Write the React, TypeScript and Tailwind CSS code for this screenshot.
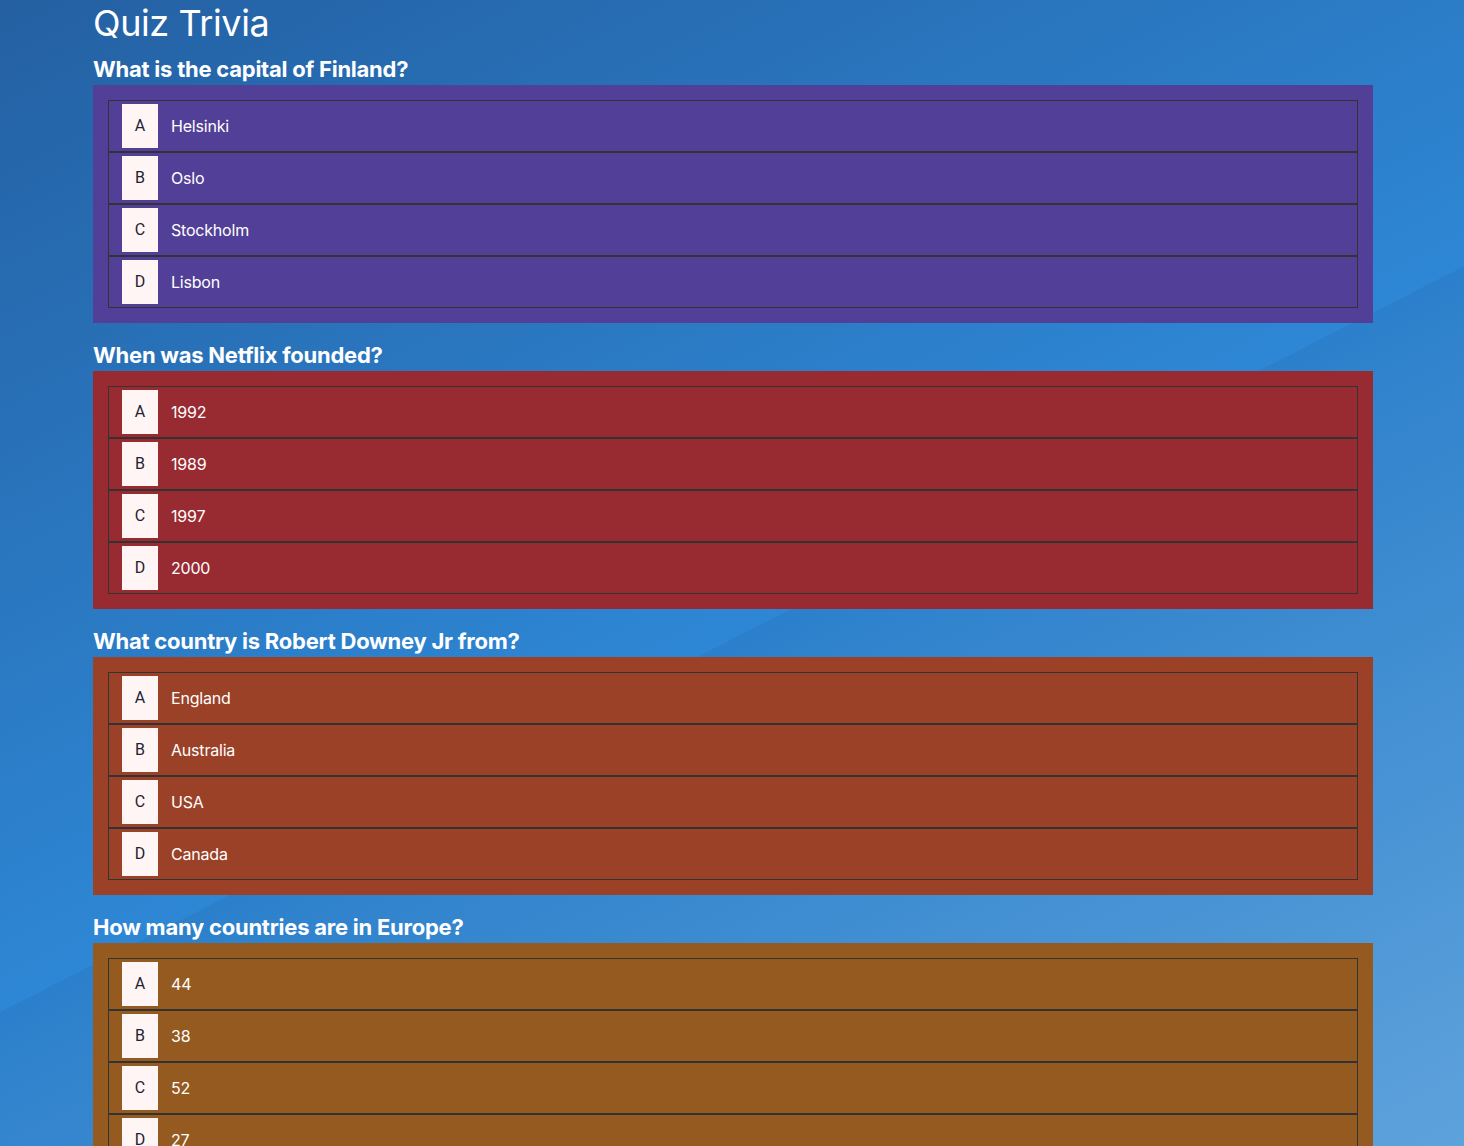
import React from "react";

type Q = { q: string; answers: string[]; bg: string };

const questions: Q[] = [
  { q: "What is the capital of Finland?", answers: ["Helsinki", "Oslo", "Stockholm", "Lisbon"], bg: "bg-[#523f97]" },
  { q: "When was Netflix founded?", answers: ["1992", "1989", "1997", "2000"], bg: "bg-[#982b31]" },
  { q: "What country is Robert Downey Jr from?", answers: ["England", "Australia", "USA", "Canada"], bg: "bg-[#9a4128]" },
  { q: "How many countries are in Europe?", answers: ["44", "38", "52", "27"], bg: "bg-[#955a1f]" },
];

const letters = ["A", "B", "C", "D"];

export default function App() {
  return (
    <div className="min-h-screen bg-fixed bg-[linear-gradient(153deg,#2460a2_0%,#2e87d5_53.5%,#2c80cb_53.5%,#5ea2dc_100%)] font-['Inter',sans-serif] text-white">
      <div className="ml-[93px] w-[1280px] pb-10">
        <h1 className="pt-[3px] text-[36px] leading-[40px] font-normal tracking-[-0.4px]">Quiz Trivia</h1>
        {questions.map((item, i) => (
          <section key={i}>
            <h2
              className={`mb-[1px] text-[22px] leading-[30px] font-bold tracking-[-0.24px] ${i === 0 ? "mt-[11px]" : "mt-[17px]"}`}
            >
              {item.q}
            </h2>
            <div className={`${item.bg} p-[15px]`}>
              <ul>
                {item.answers.map((a, j) => (
                  <li key={j} className="flex h-[52px] items-center gap-[13px] border border-[#333333] px-[13px]">
                    <span className="flex h-[44px] w-[36px] items-center justify-center bg-[#fff5f5] font-['Roboto',sans-serif] text-[16px] text-[#1f2330]">
                      {letters[j]}
                    </span>
                    <span className="text-[16px] tracking-[-0.2px]">{a}</span>
                  </li>
                ))}
              </ul>
            </div>
          </section>
        ))}
      </div>
    </div>
  );
}
